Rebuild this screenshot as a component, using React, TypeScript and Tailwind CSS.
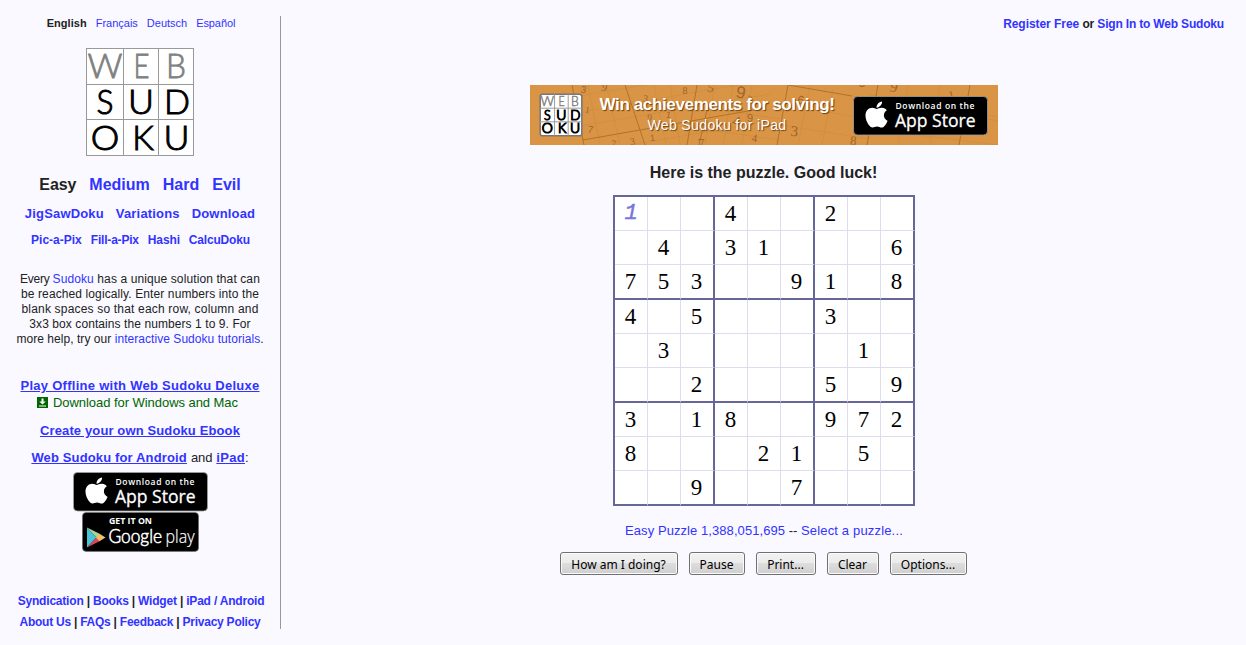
import React from "react";
import { FaApple } from "react-icons/fa";

const puzzle = [
  "1  4  2  ",
  " 4 31   6",
  "753  91 8",
  "4 5   3  ",
  " 3     1 ",
  "  2   5 9",
  "3 18  972",
  "8   21 5 ",
  "  9  7   ",
];

function A({ className = "", children }: { className?: string; children: React.ReactNode }) {
  return (
    <a href="#" className={`text-[#3333ff] ${className}`}>
      {children}
    </a>
  );
}

const logoLetters: [string, number, number, number][] = [
  ["W", 19, 30, 35],
  ["E", 55.5, 30, 16],
  ["B", 90, 30, 20],
  ["S", 19, 66, 17],
  ["U", 55, 66, 26],
  ["D", 91, 66, 26],
  ["O", 19, 101.5, 28.5],
  ["K", 57, 101.5, 21.5],
  ["U", 90.5, 101.5, 26],
];

function Logo({ size, heavy = false }: { size: number; heavy?: boolean }) {
  return (
    <svg width={size} height={size} viewBox="0 0 108 108" className="block overflow-visible">
      <rect x="0.5" y="0.5" width="107" height="107" rx={heavy ? 6 : 0} fill="#fff" stroke={heavy ? "#777" : "#999"} strokeWidth={heavy ? 4 : 1} />
      <path d="M37.5 0V108M72.5 0V108M0 36.5H108M0 71.5H108" stroke="#999" strokeWidth={heavy ? 2.5 : 1} />
      {logoLetters.map(([ch, x, y, w], i) => (
        <text
          key={i}
          x={x - w / 2}
          y={y}
          textLength={w}
          lengthAdjust="spacingAndGlyphs"
          fontFamily="Lato, sans-serif"
          fontWeight={300}
          fontSize={33.5}
          fill={i < 3 ? "#808080" : "#000"}
          stroke={i < 3 ? "#808080" : "#000"}
          strokeWidth={heavy ? (i < 3 ? 1.2 : 3) : i < 3 ? 0.8 : 1}
        >
          {ch}
        </text>
      ))}
    </svg>
  );
}

function AppStoreBadge() {
  return (
    <svg width="135" height="40" viewBox="0 0 135 40" className="block" fill="#fff" fontFamily="'Open Sans', sans-serif">
      <rect x="0.5" y="0.5" width="134" height="38.5" rx="4" fill="#000" stroke="#a0a0a0" strokeWidth="0.8" />
      <FaApple x={8.5} y={3.5} size={30} color="#fff" />
      <text x="42.5" y="13.3" fontSize="8.5" fontWeight={600} textLength="79" lengthAdjust="spacing">Download on the</text>
      <text x="42" y="31" fontSize="17.5" fontWeight={500} textLength="80.5" lengthAdjust="spacingAndGlyphs" stroke="#fff" strokeWidth="0.3">App Store</text>
    </svg>
  );
}

function GooglePlayBadge() {
  return (
    <svg width="117" height="40" viewBox="0 0 117 40" className="block" fill="#fff">
      <rect x="0.4" y="0.4" width="116.2" height="39" rx="4" fill="#000" stroke="#777" strokeWidth="0.6" />
      <path d="M5 15.5L14.5 25.5L5 35.5Z" fill="#4ac3d6" />
      <path d="M5 15.5L18 22L14.5 25.5Z" fill="#a5d49b" />
      <path d="M5 35.5L18 29L14.5 25.5Z" fill="#d8475c" />
      <path d="M17.5 21.8L23.5 25.5L17.5 29.2L14 25.5Z" fill="#f3bd6a" />
      <text x="27" y="11.5" fontFamily="'Open Sans', sans-serif" fontWeight={700} fontSize="8.2" textLength="43" lengthAdjust="spacingAndGlyphs">GET IT ON</text>
      <text x="26.5" y="31" fontFamily="Lato, sans-serif" fontWeight={300} fontSize="20" textLength="53.5" lengthAdjust="spacingAndGlyphs" stroke="#fff" strokeWidth="0.6">Google</text>
      <text x="83.5" y="31" fontFamily="'Open Sans', sans-serif" fontWeight={300} fontSize="19" textLength="29" lengthAdjust="spacingAndGlyphs" stroke="#fff" strokeWidth="0.2">play</text>
    </svg>
  );
}

const bannerDigits: [string, number, number, number, number][] = [
  ["3", 53, 8, 10, 10], ["9", 73, 6, 11, 20], ["1", 57, 28, 9, 10], ["7", 60, 48, 10, 10],
  ["7", 83, 62, 10, 10], ["3", 103, 60, 10, -8], ["1", 123, 56, 9, -8], ["3", 115, 17, 10, 10],
  ["9", 119, 36, 10, 10], ["1", 138, 33, 9, 10], ["8", 155, 9, 10, 0], ["5", 180, 7, 13, 10],
  ["9", 210, 13, 17, 10], ["2", 218, 18, 11, 20], ["4", 205, 41, 15, 15], ["9", 220, 37, 11, 0],
  ["4", 224, 57, 11, 8], ["7", 171, 64, 14, 0], ["6", 270, 19, 12, 10], ["3", 264, 51, 15, 5],
  ["8", 323, 60, 13, 5], ["5", 332, 2, 12, 0], ["9", 363, 7, 15, 12], ["1", 422, 14, 12, -10],
];

function BannerArt() {
  return (
    <svg width="468" height="60" viewBox="0 0 468 60" className="absolute inset-0">
      <rect width="468" height="60" fill="#d99545" />
      <path
        d="M58 0L70 60M76 0L90 60M44 12L150 -6M47 28L235 -5M50 41L240 9M100 60L240 36M124 0L136 60M140 0L150 60M185 0L175 60M203 0L193 60M222 0L212 60M160 20L250 34M158 42L250 55M280 0L268 60M303 4L292 60M254 20L340 34M250 40L340 54M378 0L368 60M410 0L400 60M340 10L468 32M340 44L468 60M322 11L468 36"
        stroke="#cf8d3f"
        strokeWidth="0.7"
        fill="none"
      />
      <path d="M42 0L54 60M53 55L235 23M95 0L115 60M167 0L157 60M177 25L169 60M258 0L322 11M258 0L247 60M348 0L337 60M440 0L429 60" stroke="#b27229" strokeWidth="1" fill="none" />
      {bannerDigits.map(([d, x, y, s, r], i) => (
        <text
          key={i}
          x={x}
          y={y}
          fontSize={s}
          textAnchor="middle"
          fontFamily={i % 3 === 0 ? "'Liberation Sans', sans-serif" : "'Liberation Serif', serif"}
          fill="#a0642a"
          transform={`rotate(${r} ${x} ${y})`}
        >
          {d}
        </text>
      ))}
    </svg>
  );
}

function Banner() {
  return (
    <div className="relative h-[60px] w-[468px] overflow-hidden">
      <BannerArt />
      <div className="relative flex h-full items-start">
        <div className="mt-[9px] mr-px ml-[10px]">
          <Logo size={42} heavy />
        </div>
        <div className="ml-[16px] mt-[10px] w-[236px] text-center whitespace-nowrap text-white [text-shadow:1px_1px_1px_#6b4010]">
          <div className="text-[17px] leading-[20px] font-bold tracking-[-0.36px]">Win achievements for solving!</div>
          <div className="mt-px text-[14px] leading-[18px] tracking-[0.37px]">Web Sudoku for iPad</div>
        </div>
        <div className="ml-[18px] mt-[11px]">
          <AppStoreBadge />
        </div>
      </div>
    </div>
  );
}

function Grid() {
  return (
    <table className="h-[311px] w-[302px] table-fixed border-separate border-spacing-0 border-t-2 border-l-2 border-[#666699] bg-white">
      <tbody>
        {puzzle.map((row, r) => (
          <tr key={r}>
            {row.split("").map((d, c) => (
              <td
                key={c}
                className={[
                  "p-0 text-center align-middle leading-none",
                  c % 3 === 2 ? "w-[34px] border-r-2 border-r-[#666699]" : "w-[33px] border-r border-r-[#ddddee]",
                  r % 3 === 2 ? "h-[35px] border-b-2 border-b-[#666699]" : "h-[34px] border-b border-b-[#ddddee]",
                  r === 0 && c === 0
                    ? "pt-px font-['Liberation_Mono'] text-[22px] italic text-[#7777dd] [-webkit-text-stroke:0.5px_#7777dd]"
                    : "pr-px font-['Liberation_Serif'] text-[23px] text-black",
                ].join(" ")}
              >
                {d.trim()}
              </td>
            ))}
          </tr>
        ))}
      </tbody>
    </table>
  );
}

const buttons: [string, string][] = [
  ["How am I doing?", "w-[118px]"],
  ["Pause", "w-[56px]"],
  ["Print...", "w-[60px]"],
  ["Clear", "w-[52px]"],
  ["Options...", "w-[77px]"],
];

function Sidebar() {
  return (
    <aside className="flex w-[280px] shrink-0 flex-col items-center pt-[15px] whitespace-nowrap">
      <div className="flex h-4 gap-[9px] pl-[2px] text-[11px] leading-4">
        <b className="tracking-[0.03px]">English</b>
        <A>Français</A>
        <A>Deutsch</A>
        <A className="tracking-[-0.1px]">Español</A>
      </div>
      <div className="mt-[17px]">
        <Logo size={108} />
      </div>
      <div className="mt-[19px] flex h-5 gap-[13px] text-[16px] leading-5 font-bold">
        <span className="tracking-[-0.1px]">Easy</span>
        <A>Medium</A>
        <A>Hard</A>
        <A>Evil</A>
      </div>
      <div className="mt-[11px] flex h-4 gap-[12px] text-[13px] leading-4 font-bold tracking-[0.17px]">
        <A>JigSawDoku</A>
        <A>Variations</A>
        <A>Download</A>
      </div>
      <div className="mt-[10px] flex h-4 gap-[9px] pl-px text-[12px] leading-4 font-bold">
        <A>Pic-a-Pix</A>
        <A className="tracking-[-0.2px]">Fill-a-Pix</A>
        <A className="tracking-[-0.13px]">Hashi</A>
        <A className="tracking-[-0.18px]">CalcuDoku</A>
      </div>
      <p className="mt-[24px] text-center text-[12px] leading-[15px]">
        <span className="tracking-[0.105px]">
          <span className="tracking-[-0.25px]">Every </span>
          <A>Sudoku</A> has a unique solution that can
        </span>
        <br />
        <span className="tracking-[0.108px]">be reached logically. Enter numbers into the</span>
        <br />
        <span className="tracking-[0.184px]">blank spaces so that each row, column and</span>
        <br />
        <span className="tracking-[0.08px]">3x3 box contains the numbers 1 to 9. For</span>
        <br />
        <span className="tracking-[0.05px]">
          more help, try our <A>interactive Sudoku tutorials</A>.
        </span>
      </p>
      <A className="mt-[31px] h-4 text-[13px] leading-4 font-bold tracking-[0.273px] underline">Play Offline with Web Sudoku Deluxe</A>
      <div className="mt-px flex h-4 items-center gap-[5px] pr-[5px] text-[13px] leading-4 text-[#006600]">
        <svg width="11" height="11" viewBox="0 0 11 11" className="mb-[2px] block">
          <rect width="11" height="11" fill="#006600" />
          <path d="M4.5 1.5h2v3h2.2L5.5 7.6 2.3 4.5h2.2ZM2 8.5h7v1H2Z" fill="#fff" />
        </svg>
        <span className="tracking-[-0.05px]">Download for Windows and Mac</span>
      </div>
      <A className="mt-[12px] h-4 text-[13px] leading-4 font-bold tracking-[0.126px] underline">Create your own Sudoku Ebook</A>
      <div className="mt-[11px] flex h-4 gap-[4px] text-[13px] leading-4">
        <A className="font-bold tracking-[0.143px] underline">Web Sudoku for Android</A>
        <span className="tracking-[-0.1px]">and</span>
        <span>
          <A className="font-bold tracking-[0.3px] underline">iPad</A>:
        </span>
      </div>
      <div className="mt-[6px] flex flex-col items-center">
        <AppStoreBadge />
        <GooglePlayBadge />
      </div>
      <div className="mt-[41px] h-4 pl-[2px] text-[12px] leading-4 font-bold tracking-[-0.2px]">
        <A>Syndication</A> | <A>Books</A> | <A>Widget</A> | <A>iPad / Android</A>
      </div>
      <div className="mt-[5px] h-4 text-[12px] leading-4 font-bold tracking-[-0.244px]">
        <A>About Us</A> | <A>FAQs</A> | <A>Feedback</A> | <A>Privacy Policy</A>
      </div>
    </aside>
  );
}

export default function App() {
  return (
    <div className="flex h-[645px] w-[1246px] overflow-hidden bg-[#f9f9ff] font-['Liberation_Sans',sans-serif] text-[#222222]">
      <Sidebar />
      <div className="mt-4 h-[613px] w-px shrink-0 bg-[#999999]" />
      <main className="flex flex-1 flex-col items-center pt-[15px] pl-px whitespace-nowrap">
        <div className="h-4 self-end pr-[22px] text-[12px] leading-[18px] font-bold tracking-[-0.13px]">
          <A className="tracking-[-0.05px]">Register Free</A> or <A className="tracking-[-0.18px]">Sign In to Web Sudoku</A>
        </div>
        <div className="mt-[54px]">
          <Banner />
        </div>
        <h1 className="mt-[18px] h-5 pr-px text-[16px] leading-5 font-bold">Here is the puzzle. Good luck!</h1>
        <div className="mt-[12px]">
          <Grid />
        </div>
        <div className="mt-[17px] h-4 text-[13px] leading-4">
          <A className="tracking-[0.07px]">Easy Puzzle 1,388,051,695</A> -- <A className="tracking-[0.167px]">Select a puzzle...</A>
        </div>
        <div className="mt-[13px] flex w-[408px] gap-[11px]">
          {buttons.map(([label, width]) => (
            <button
              key={label}
              className={`${width} h-[23px] rounded-[3px] border border-[#707070] bg-[linear-gradient(#f2f2f2_0%,#ebebeb_50%,#dddddd_50%,#cfcfcf_100%)] px-0 pt-[2px] pr-px pb-0 font-['Noto_Sans'] text-[12px] leading-[19px] text-black shadow-[inset_0_0_0_1px_#fafafa]`}
            >
              {label}
            </button>
          ))}
        </div>
      </main>
    </div>
  );
}
